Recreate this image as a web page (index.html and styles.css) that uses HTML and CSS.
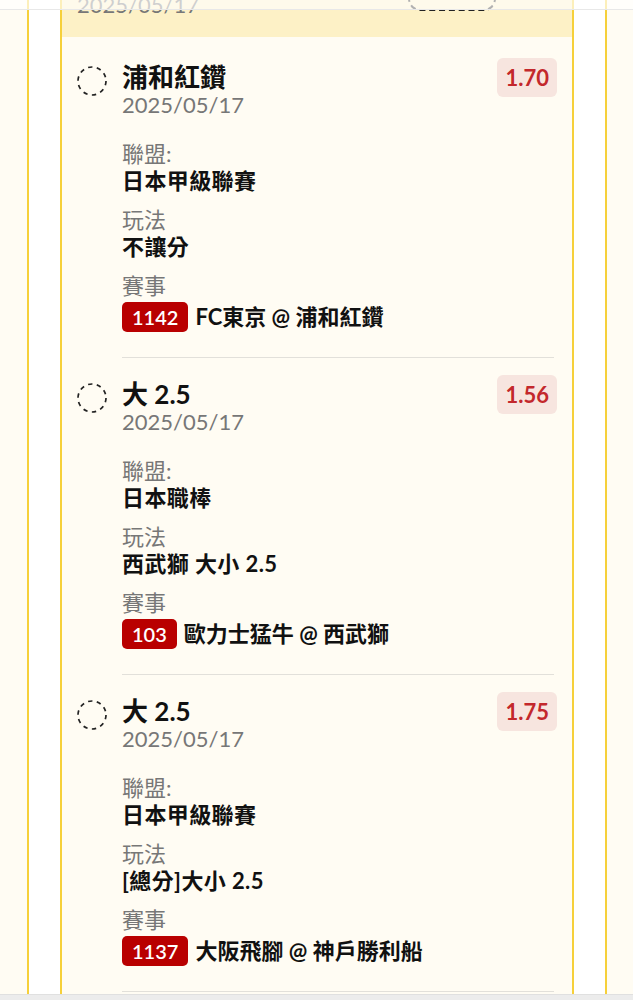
FILE: index.html
```html
<!DOCTYPE html>
<html>
    <head>
<meta name="viewport" content="width=device-width, initial-scale=1.0">
        <title>注單</title>
        <link rel="stylesheet" href="styles.css">
    </head>
    <body>
        <div class="topbar"></div>
        <div class="page">
            <div class="card">
                <div class="cardHead">
                    <span class="headDate">2025/05/17</span>
                    <span class="headPill"></span>
                </div>
                <div class="list">
                    <div class="bet">
                        <svg class="pick" width="30" height="30" viewBox="0 0 30 30"><circle cx="15" cy="15" r="14" fill="none" stroke="#222" stroke-width="1.7" stroke-dasharray="4.4 4.4"/></svg>
                        <div class="betBody">
                            <div class="betTop">
                                <div>
                                    <div class="betName">浦和紅鑽</div>
                                    <div class="betDate">2025/05/17</div>
                                </div>
                                <span class="odds">1.70</span>
                            </div>
                            <div class="field">
                                <div class="label">聯盟:</div>
                                <div class="value">日本甲級聯賽</div>
                            </div>
                            <div class="field">
                                <div class="label">玩法</div>
                                <div class="value">不讓分</div>
                            </div>
                            <div class="field">
                                <div class="label">賽事</div>
                                <div class="value match"><span class="code">1142</span>FC東京 @ 浦和紅鑽</div>
                            </div>
                        </div>
                    </div>
                    <div class="bet">
                        <svg class="pick" width="30" height="30" viewBox="0 0 30 30"><circle cx="15" cy="15" r="14" fill="none" stroke="#222" stroke-width="1.7" stroke-dasharray="4.4 4.4"/></svg>
                        <div class="betBody">
                            <div class="betTop">
                                <div>
                                    <div class="betName">大 2.5</div>
                                    <div class="betDate">2025/05/17</div>
                                </div>
                                <span class="odds">1.56</span>
                            </div>
                            <div class="field">
                                <div class="label">聯盟:</div>
                                <div class="value">日本職棒</div>
                            </div>
                            <div class="field">
                                <div class="label">玩法</div>
                                <div class="value">西武獅 大小 2.5</div>
                            </div>
                            <div class="field">
                                <div class="label">賽事</div>
                                <div class="value match"><span class="code">103</span>歐力士猛牛 @ 西武獅</div>
                            </div>
                        </div>
                    </div>
                    <div class="bet">
                        <svg class="pick" width="30" height="30" viewBox="0 0 30 30"><circle cx="15" cy="15" r="14" fill="none" stroke="#222" stroke-width="1.7" stroke-dasharray="4.4 4.4"/></svg>
                        <div class="betBody">
                            <div class="betTop">
                                <div>
                                    <div class="betName">大 2.5</div>
                                    <div class="betDate">2025/05/17</div>
                                </div>
                                <span class="odds">1.75</span>
                            </div>
                            <div class="field">
                                <div class="label">聯盟:</div>
                                <div class="value">日本甲級聯賽</div>
                            </div>
                            <div class="field">
                                <div class="label">玩法</div>
                                <div class="value">[總分]大小 2.5</div>
                            </div>
                            <div class="field">
                                <div class="label">賽事</div>
                                <div class="value match"><span class="code">1137</span>大阪飛腳 @ 神戶勝利船</div>
                            </div>
                        </div>
                    </div>
                </div>
            </div>
        </div>
        <div class="bottombar"></div>
    </body>
</html>
```

FILE: styles.css
```css
body{
    margin:0;
    background-color:#fffcf3;
    font-family:"Lato","Noto Sans CJK TC",sans-serif;
    color:#111;
}
.topbar{
    position:fixed;
    top:0;
    left:0;
    right:0;
    height:9px;
    background:rgba(255,255,255,0.65);
    border-bottom:1px solid #e8e8e8;
    z-index:2;
}
.bottombar{
    position:fixed;
    bottom:0;
    left:0;
    right:0;
    height:5px;
    background:#ececec;
    border-top:1px solid #e0e0e0;
    z-index:2;
}
.page{
    margin:0 26px 0 27px;
    padding:0 31px;
    background:#fff;
    border-left:2px solid #f6d03a;
    border-right:2px solid #f6d03a;
    min-height:1000px;
}
.card{
    background:#fffcf3;
    border-left:2px solid #f6d03a;
    border-right:2px solid #f6d03a;
    min-height:1000px;
}
.cardHead{
    height:37px;
    background:#fdf1c6;
    display:flex;
    align-items:flex-start;
    padding:0 76px 0 15px;
    overflow:hidden;
}
.headDate{
    font-size:22px;
    line-height:27px;
    color:#777;
    margin-top:-9px;
}
.headPill{
    margin-left:auto;
    width:84px;
    height:30px;
    margin-top:-23px;
    border:2px dashed #222;
    border-radius:12px;
}
.list{
    padding-top:4px;
}
.bet{
    display:flex;
    padding:21px 18px 0 15px;
}
.pick{
    flex:none;
    margin-top:4px;
    margin-right:15px;
}
.betBody{
    flex:1;
    border-bottom:1px solid #e2e0da;
    padding-bottom:25px;
}
.betTop{
    display:flex;
    justify-content:space-between;
    align-items:flex-start;
    margin-bottom:22px;
}
.betName{
    font-size:26px;
    line-height:30px;
    font-weight:700;
}
.betDate{
    font-size:22px;
    line-height:26px;
    color:#777;
}
.odds{
    margin-top:-4px;
    margin-right:-3px;
    padding:0 8px;
    height:39px;
    line-height:39px;
    font-size:22px;
    font-weight:700;
    color:#c3282c;
    background:#f7e5df;
    border-radius:6px;
}
.field{
    margin-bottom:11px;
}
.field:last-child{
    margin-bottom:0;
}
.label{
    font-size:22px;
    line-height:27px;
    color:#777;
}
.value{
    font-size:22px;
    line-height:28px;
    font-weight:700;
    letter-spacing:0.4px;
}
.match{
    display:flex;
    align-items:center;
    margin-top:3px;
    letter-spacing:0;
}
.code{
    display:inline-block;
    height:30px;
    line-height:30px;
    padding:0 10px;
    margin-right:7px;
    background:#b90000;
    color:#fff;
    font-size:20px;
    font-weight:600;
    border-radius:5px;
}
```
